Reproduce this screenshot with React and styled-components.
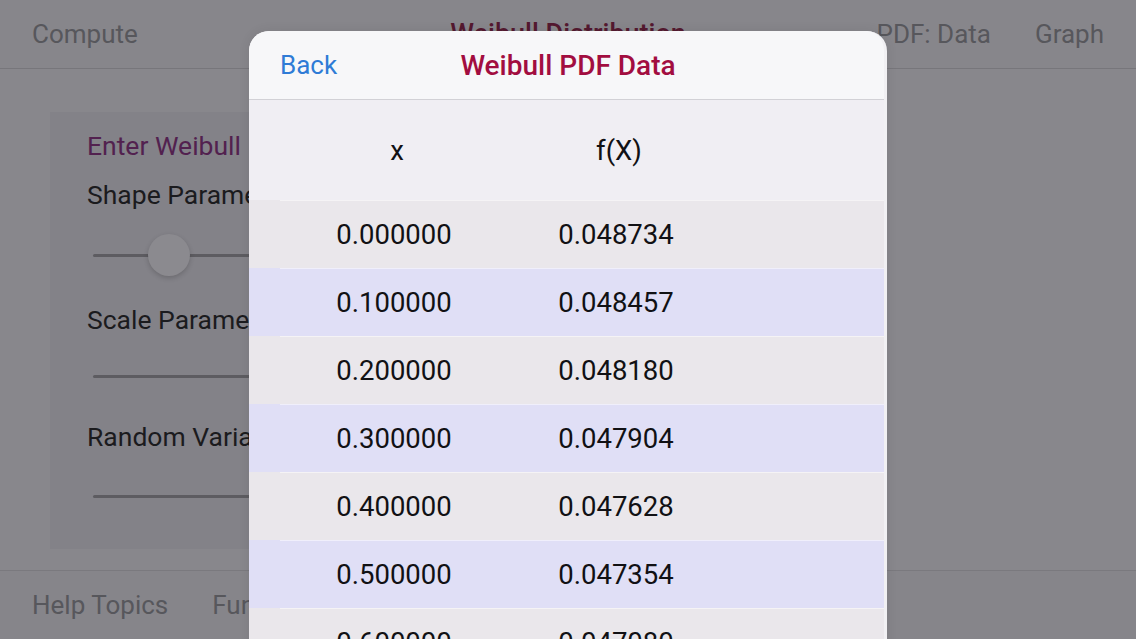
import React from 'react'
import styled, { createGlobalStyle } from 'styled-components'

const ROWS = [
  ['0.000000', '0.048734'],
  ['0.100000', '0.048457'],
  ['0.200000', '0.048180'],
  ['0.300000', '0.047904'],
  ['0.400000', '0.047628'],
  ['0.500000', '0.047354'],
  ['0.600000', '0.047080'],
]

function App() {
  return (
    <Page>
      <Global />
      <NavBar>
        <NavItem>Compute</NavItem>
        <NavTitle>Weibull Distribution</NavTitle>
        <NavRight>
          <NavItem>PDF: Data</NavItem>
          <NavItem>Graph</NavItem>
        </NavRight>
      </NavBar>

      <Main>
        <Panel>
          <Heading>Enter Weibull Parameters</Heading>
          <Label gap={19}>Shape Parameter</Label>
          <Slider gap={25}><Track /><Thumb /></Slider>
          <Label gap={30}>Scale Parameter</Label>
          <Slider gap={21}><Track /></Slider>
          <Label gap={26}>Random Variable</Label>
          <Slider gap={24}><Track /></Slider>
        </Panel>
      </Main>

      <TabBar>
        <NavItem>Help Topics</NavItem>
        <NavItem>Functions</NavItem>
      </TabBar>

      <Modal>
        <ModalHeader>
          <BackButton>Back</BackButton>
          <ModalTitle>Weibull PDF Data</ModalTitle>
        </ModalHeader>
        <TableHead>
          <Cell>x</Cell>
          <Cell>f(X)</Cell>
        </TableHead>
        { ROWS.map((row, index) => (
          <Row key={index} odd={index % 2 === 1}>
            <Cell>{ row[0] }</Cell>
            <Cell>{ row[1] }</Cell>
          </Row>
        )) }
      </Modal>
    </Page>
  )
}

const Global = createGlobalStyle`
  html, body {
    margin: 0;
    padding: 0;
    overflow: hidden;
  }
  body {
    font-family: Roboto, "Liberation Sans", sans-serif;
  }
`

const Page = styled.div`
  position: relative;
  width: 1136px;
  height: 639px;
  overflow: hidden;
  background: #88878c;
  display: flex;
  flex-direction: column;
`

const NavBar = styled.div`
  height: 68px;
  flex-shrink: 0;
  display: flex;
  align-items: center;
  padding: 0 32px;
  border-bottom: 1px solid #77767b;
  background: #87868b;
  position: relative;
`

const NavItem = styled.div`
  font-size: 26px;
  color: #57575c;
  white-space: nowrap;
`

const NavTitle = styled.div`
  position: absolute;
  left: 0;
  right: 0;
  text-align: center;
  font-size: 27px;
  font-weight: 500;
  color: #541930;
`

const NavRight = styled.div`
  margin-left: auto;
  display: flex;
  gap: 44px;
`

const Main = styled.div`
  flex: 1;
  padding: 43px 0 0 50px;
`

const Panel = styled.div`
  width: 820px;
  height: 437px;
  box-sizing: border-box;
  padding: 19px 0 0 37px;
  background: #838288;
  display: flex;
  flex-direction: column;
`

const Heading = styled.div`
  font-size: 26.5px;
  line-height: 30px;
  color: #52214f;
  white-space: nowrap;
`

const Label = styled.div`
  margin-top: ${props => props.gap}px;
  font-size: 26.5px;
  line-height: 30px;
  color: #1b1b1e;
  white-space: nowrap;
`

const Slider = styled.div`
  margin-top: ${props => props.gap}px;
  margin-left: 6px;
  height: 40px;
  width: 400px;
  position: relative;
  display: flex;
  align-items: center;
`

const Track = styled.div`
  width: 100%;
  height: 3px;
  border-radius: 2px;
  background: #5d5c61;
`

const Thumb = styled.div`
  position: absolute;
  left: 55px;
  top: -1px;
  width: 42px;
  height: 42px;
  border-radius: 50%;
  background: #8b8a8f;
  box-shadow: 0 2px 5px rgba(0, 0, 0, 0.18);
`

const TabBar = styled.div`
  height: 68px;
  flex-shrink: 0;
  display: flex;
  align-items: center;
  gap: 44px;
  padding: 0 32px;
  border-top: 1px solid #7a797e;
  background: #86858a;
`

const Modal = styled.div`
  position: absolute;
  left: 249px;
  top: 31px;
  width: 638px;
  height: 640px;
  border-radius: 20px 20px 0 0;
  overflow: hidden;
  background: #efedf2;
  border-right: 3px solid #f1f0f3;
  box-sizing: border-box;
  box-shadow: 0 0 12px rgba(0, 0, 0, 0.08);
`

const ModalHeader = styled.div`
  height: 68px;
  position: relative;
  display: flex;
  align-items: center;
  padding-left: 31px;
  background: #f7f7f9;
  border-bottom: 1px solid #d2d1d6;
`

const BackButton = styled.div`
  font-size: 26px;
  color: #2f7bd6;
`

const ModalTitle = styled.div`
  position: absolute;
  left: 0;
  right: -3px;
  text-align: center;
  font-size: 28px;
  font-weight: 500;
  color: #a20d40;
`

const TableHead = styled.div`
  height: 100px;
  display: grid;
  grid-template-columns: 222px 222px;
  padding-left: 37px;
  align-items: center;
  background: #f0eef3;
`

const Row = styled.div`
  height: 68px;
  box-sizing: border-box;
  display: grid;
  grid-template-columns: 222px 222px;
  padding-left: 34px;
  align-items: center;
  position: relative;
  background: ${props => props.odd ? '#e0dff6' : '#eae7eb'};

  &::before {
    content: '';
    position: absolute;
    left: 31px;
    right: 0;
    top: 0;
    height: 1px;
    background: rgba(255, 255, 255, 0.5);
  }
`

const Cell = styled.div`
  text-align: center;
  font-size: 27.5px;
  color: #111114;
`

export default App
